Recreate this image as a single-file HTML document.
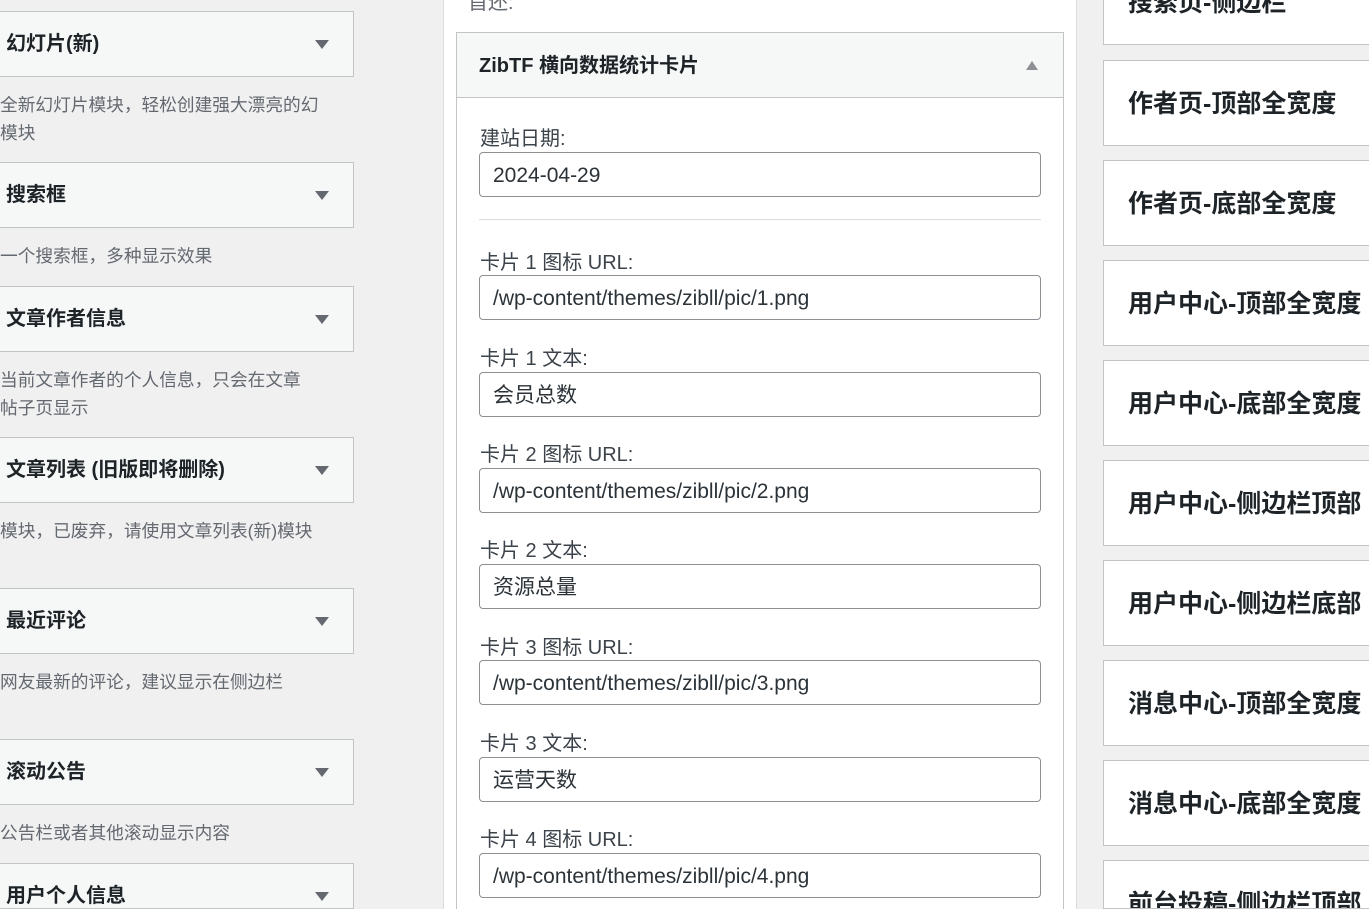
<!DOCTYPE html>
<html style="overflow:hidden;height:909px"><head><meta charset="utf-8"><style>
*{box-sizing:border-box;margin:0;padding:0}
body{width:1369px;height:909px;overflow:hidden;background:#f0f0f1;position:relative;font-family:"Liberation Sans","Noto Sans CJK SC",sans-serif;color:#1d2327}
.a{position:absolute}
.lh{position:absolute;left:-1px;width:355px;height:66px;background:#f6f7f7;border:1px solid #c3c4c7;font-size:20px;font-weight:700;line-height:64px;padding-left:6px;overflow:hidden}
.lh:after{content:"";position:absolute;left:315px;top:28px;border-left:7px solid transparent;border-right:7px solid transparent;border-top:9px solid #646970}
.ld{position:absolute;left:0;width:340px;font-size:17.7px;color:#646970;line-height:28px}
.mid{position:absolute;left:443px;top:-2px;width:634px;height:911px;background:#fff;border-left:1px solid #dcdcde;border-right:1px solid #dcdcde}
.lab{position:absolute;left:480px;font-size:20px;color:#3c434a}
.in{position:absolute;left:479px;width:562px;height:45px;border:1px solid #8c8f94;border-radius:4px;font-size:21px;line-height:46px;padding-left:13px;color:#2c3338;background:#fff}
.rb{position:absolute;left:1103px;width:280px;height:86px;background:#fff;border:1px solid #c3c4c7;font-size:25px;font-weight:700;line-height:86px;padding-left:24px;white-space:nowrap}
</style></head><body>
<div class="lh" style="top:11px">幻灯片(新)</div>
<div class="ld" style="top:91px">全新幻灯片模块，轻松创建强大漂亮的幻<br>模块</div>
<div class="lh" style="top:162px">搜索框</div>
<div class="ld" style="top:242px">一个搜索框，多种显示效果</div>
<div class="lh" style="top:286px">文章作者信息</div>
<div class="ld" style="top:366px">当前文章作者的个人信息，只会在文章<br>帖子页显示</div>
<div class="lh" style="top:437px">文章列表 (旧版即将删除)</div>
<div class="ld" style="top:517px">模块，已废弃，请使用文章列表(新)模块</div>
<div class="lh" style="top:588px">最近评论</div>
<div class="ld" style="top:668px">网友最新的评论，建议显示在侧边栏</div>
<div class="lh" style="top:739px">滚动公告</div>
<div class="ld" style="top:819px">公告栏或者其他滚动显示内容</div>
<div class="lh" style="top:863px;height:46px">用户个人信息</div>

<div class="mid"></div>
<div class="a" style="left:468px;top:-14px;font-size:20px;color:#646970">首还:</div>
<div class="a" style="left:456px;top:32px;width:608px;height:880px;border:1px solid #c3c4c7;background:#fff"></div>
<div class="a" style="left:457px;top:33px;width:606px;height:65px;background:#f6f7f7;border-bottom:1px solid #c3c4c7;font-size:20px;font-weight:700;line-height:66px;padding-left:22px">ZibTF 横向数据统计卡片</div>
<div class="a" style="left:1026px;top:61px;border-left:6px solid transparent;border-right:6px solid transparent;border-bottom:9px solid #8c8f94"></div>
<div class="lab" style="top:122px">建站日期:</div>
<div class="in" style="top:152px">2024-04-29</div>
<div class="a" style="left:479px;top:219px;width:562px;height:1px;background:#dcdcde"></div>
<div class="lab" style="top:246px">卡片 1 图标 URL:</div>
<div class="in" style="top:275px">/wp-content/themes/zibll/pic/1.png</div>
<div class="lab" style="top:342px">卡片 1 文本:</div>
<div class="in" style="top:372px">会员总数</div>
<div class="lab" style="top:438px">卡片 2 图标 URL:</div>
<div class="in" style="top:468px">/wp-content/themes/zibll/pic/2.png</div>
<div class="lab" style="top:534px">卡片 2 文本:</div>
<div class="in" style="top:564px">资源总量</div>
<div class="lab" style="top:631px">卡片 3 图标 URL:</div>
<div class="in" style="top:660px">/wp-content/themes/zibll/pic/3.png</div>
<div class="lab" style="top:727px">卡片 3 文本:</div>
<div class="in" style="top:757px">运营天数</div>
<div class="lab" style="top:823px">卡片 4 图标 URL:</div>
<div class="in" style="top:853px">/wp-content/themes/zibll/pic/4.png</div>

<div class="rb" style="top:-41px">搜索页-侧边栏</div>
<div class="rb" style="top:60px">作者页-顶部全宽度</div>
<div class="rb" style="top:160px">作者页-底部全宽度</div>
<div class="rb" style="top:260px">用户中心-顶部全宽度</div>
<div class="rb" style="top:360px">用户中心-底部全宽度</div>
<div class="rb" style="top:460px">用户中心-侧边栏顶部</div>
<div class="rb" style="top:560px">用户中心-侧边栏底部</div>
<div class="rb" style="top:660px">消息中心-顶部全宽度</div>
<div class="rb" style="top:760px">消息中心-底部全宽度</div>
<div class="rb" style="top:860px;height:49px;line-height:86px;overflow:hidden">前台投稿-侧边栏顶部</div>
</body></html>
